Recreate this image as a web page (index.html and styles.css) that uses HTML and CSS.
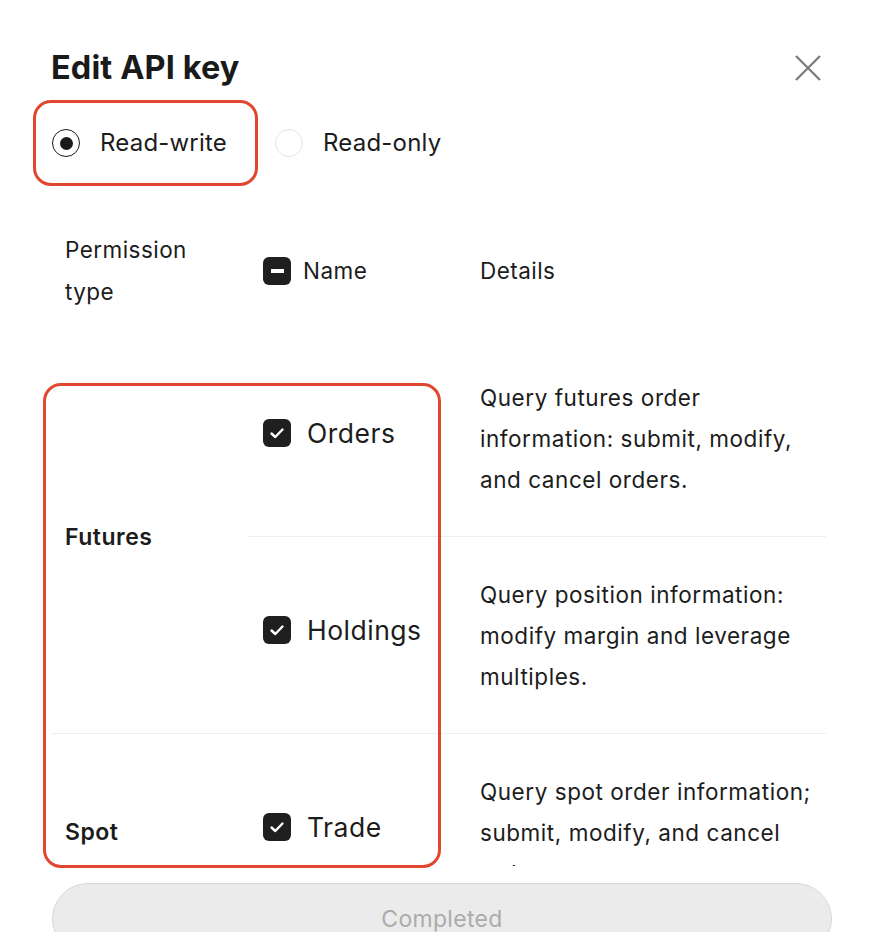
FILE: index.html
```html
<!DOCTYPE html>
<html lang="en">
<head>
    <meta charset="UTF-8">
    <meta name="viewport" content="width=device-width, initial-scale=1.0">
    <title>Edit API key</title>
    <link rel="stylesheet" href="styles.css">
</head>
<body>
    <div class="sheet">
        <div class="sheet-head">
            <h1>Edit API key</h1>
            <button class="close-btn" type="button" aria-label="Close">
                <svg width="26" height="26" viewBox="0 0 26 26"><path d="M1 1 L25 25 M25 1 L1 25" stroke="#7a7a7a" stroke-width="2.2" fill="none"/></svg>
            </button>
        </div>

        <div class="modes">
            <label class="mode mode-marked">
                <span class="radio checked"></span>
                <span>Read-write</span>
            </label>
            <label class="mode">
                <span class="radio"></span>
                <span>Read-only</span>
            </label>
        </div>

        <div class="table-wrap">
            <div class="table">
                <div class="table-head">
                    <div class="col-type">Permission<br>type</div>
                    <div class="col-name">
                        <span class="box"><span class="minus"></span></span>
                        <span>Name</span>
                    </div>
                    <div class="col-details">Details</div>
                </div>

                <div class="group">
                    <div class="group-label">Futures</div>
                    <div class="items">
                        <div class="item">
                            <div class="item-name">
                                <span class="box"><svg width="28" height="28" viewBox="0 0 28 28"><path d="M8.5 14.5 L12.3 18 L19.5 10.5" stroke="#fff" stroke-width="2.4" fill="none" stroke-linecap="round" stroke-linejoin="round"/></svg></span>
                                <span>Orders</span>
                            </div>
                            <div class="item-details">Query futures order information: submit, modify, and cancel orders.</div>
                        </div>
                        <div class="item">
                            <div class="item-name">
                                <span class="box"><svg width="28" height="28" viewBox="0 0 28 28"><path d="M8.5 14.5 L12.3 18 L19.5 10.5" stroke="#fff" stroke-width="2.4" fill="none" stroke-linecap="round" stroke-linejoin="round"/></svg></span>
                                <span>Holdings</span>
                            </div>
                            <div class="item-details">Query position information: modify margin and leverage multiples.</div>
                        </div>
                    </div>
                </div>

                <div class="group">
                    <div class="group-label">Spot</div>
                    <div class="items">
                        <div class="item">
                            <div class="item-name">
                                <span class="box"><svg width="28" height="28" viewBox="0 0 28 28"><path d="M8.5 14.5 L12.3 18 L19.5 10.5" stroke="#fff" stroke-width="2.4" fill="none" stroke-linecap="round" stroke-linejoin="round"/></svg></span>
                                <span>Trade</span>
                            </div>
                            <div class="item-details">Query spot order information; submit, modify, and cancel orders.</div>
                        </div>
                    </div>
                </div>
            </div>
            <div class="mark mark-perm"></div>
        </div>

        <button class="done-btn" type="button" disabled>Completed</button>
    </div>
</body>
</html>
```

FILE: styles.css
```css
body {
    margin: 0;
    background-color: #fff;
    font-family: Inter, "Noto Sans", sans-serif;
    color: #1c1c1c;
}
.sheet {
    padding: 48px 38px 0 52px;
}
.sheet-head {
    display: flex;
    justify-content: space-between;
    align-items: center;
}
h1 {
    margin: 0 0 0 -1px;
    font-size: 32.5px;
    line-height: 40px;
    font-weight: 700;
    letter-spacing: 0.1px;
    color: #1a1a1a;
}
.close-btn {
    background: none;
    border: none;
    padding: 0;
    margin-right: 11px;
    width: 26px;
    height: 26px;
    cursor: pointer;
}
.modes {
    display: flex;
    align-items: center;
    gap: 48px;
    margin-top: 41px;
}
.mode {
    position: relative;
    display: flex;
    align-items: center;
    gap: 20px;
    font-size: 24px;
    line-height: 28px;
    letter-spacing: 0.2px;
}
.mode-marked::after {
    content: "";
    position: absolute;
    top: -29px;
    bottom: -29px;
    left: -19px;
    right: -31px;
    border: 3px solid #e1472f;
    border-radius: 18px;
}
.radio {
    box-sizing: border-box;
    width: 28px;
    height: 28px;
    border-radius: 50%;
    border: 1.5px solid #e2e2e2;
    display: flex;
    align-items: center;
    justify-content: center;
}
.radio.checked {
    border-color: #1a1a1a;
}
.radio.checked::before {
    content: "";
    width: 13px;
    height: 13px;
    border-radius: 50%;
    background-color: #1a1a1a;
}
.table-wrap {
    position: relative;
    margin-top: 45px;
    margin-right: 6px;
}
.table {
    height: 664px;
    overflow: hidden;
}
.table-head {
    display: grid;
    grid-template-columns: 196px 217px 1fr;
    align-items: center;
    height: 138px;
    font-size: 22.5px;
    line-height: 42px;
    letter-spacing: 0.45px;
}
.col-type {
    padding-left: 13px;
}
.col-name {
    display: flex;
    align-items: center;
    gap: 12px;
    padding-left: 15px;
}
.col-details {
    padding-left: 15px;
}
.box {
    flex: none;
    width: 28px;
    height: 28px;
    border-radius: 6px;
    background-color: #1f1f1f;
    display: flex;
    align-items: center;
    justify-content: center;
}
.minus {
    width: 13px;
    height: 4px;
    background-color: #fff;
}
.group {
    display: grid;
    grid-template-columns: 196px 1fr;
    border-bottom: 1px solid #eeeeee;
}
.group-label {
    align-self: center;
    padding-left: 13px;
    font-size: 23px;
    font-weight: 600;
    letter-spacing: 0.5px;
}
.item {
    display: grid;
    grid-template-columns: 217px 1fr;
    align-items: center;
    min-height: 196px;
    border-bottom: 1px solid #eeeeee;
}
.item:last-child {
    border-bottom: none;
}
.item-name {
    display: flex;
    align-items: center;
    gap: 16px;
    padding-left: 15px;
    margin-bottom: 10px;
    font-size: 26.5px;
    letter-spacing: 0.5px;
}
.item-details {
    padding: 0 8px 0 15px;
    font-size: 22.5px;
    line-height: 41px;
    letter-spacing: 0.55px;
}
.mark {
    position: absolute;
    border: 3px solid #e1472f;
    border-radius: 18px;
}
.mark-perm {
    left: -9px;
    top: 181px;
    width: 392px;
    height: 479px;
}
.done-btn {
    display: block;
    width: 100%;
    height: 72px;
    margin-top: 17px;
    border: 1px solid #d8d8d8;
    border-radius: 36px;
    background-color: #ebebeb;
    color: #ababab;
    font-family: Inter, "Noto Sans", sans-serif;
    font-size: 23px;
    letter-spacing: 0.3px;
}
```
